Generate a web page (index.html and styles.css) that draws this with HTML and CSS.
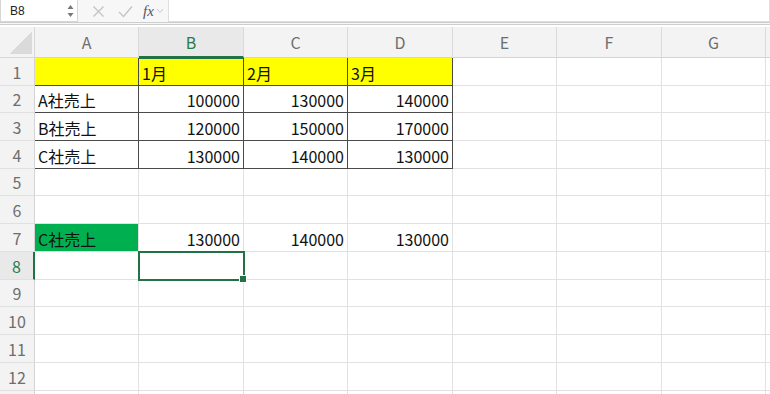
FILE: index.html
```html
<!DOCTYPE html>
<html>
  <head>
    <title>Book1</title>
    <link rel="stylesheet" href="styles.css">
  </head>

  <body>
    <div class="toolbar">
      <div class="namebox">
        <span>B8</span>
        <svg class="stepper" width="7" height="14" viewBox="0 0 7 14">
          <path d="M3.5 1 L6.5 5 L0.5 5 Z" fill="#777" />
          <path d="M3.5 13 L6.5 9 L0.5 9 Z" fill="#777" />
        </svg>
      </div>
      <div class="tools">
        <svg class="icon" width="13" height="13" viewBox="0 0 13 13">
          <path d="M1.5 1.5 L11.5 11.5 M11.5 1.5 L1.5 11.5" stroke="#c4c4c4" stroke-width="1.4" fill="none" />
        </svg>
        <svg class="icon" width="15" height="13" viewBox="0 0 15 13">
          <path d="M1 7 L5.5 11.5 L14 1.5" stroke="#c4c4c4" stroke-width="1.4" fill="none" />
        </svg>
        <span class="fx">fx</span>
        <svg class="chevron" width="8" height="6" viewBox="0 0 8 6">
          <path d="M1 1 L4 4.5 L7 1" stroke="#c8c8c8" stroke-width="1" fill="none" />
        </svg>
      </div>
      <div class="formula"></div>
    </div>

    <div class="sheet">
      <div class="corner"></div>
      <div class="colhead">A</div>
      <div class="colhead active">B</div>
      <div class="colhead">C</div>
      <div class="colhead">D</div>
      <div class="colhead">E</div>
      <div class="colhead">F</div>
      <div class="colhead">G</div>
      <div class="colhead"></div>

      <div class="rowhead">1</div>
      <div class="cell yellow bx"></div>
      <div class="cell yellow bx top-active">1月</div>
      <div class="cell yellow bx">2月</div>
      <div class="cell yellow bx">3月</div>
      <div class="cell"></div>
      <div class="cell"></div>
      <div class="cell"></div>
      <div class="cell"></div>

      <div class="rowhead">2</div>
      <div class="cell bx">A社売上</div>
      <div class="cell bx num">100000</div>
      <div class="cell bx num">130000</div>
      <div class="cell bx num">140000</div>
      <div class="cell"></div>
      <div class="cell"></div>
      <div class="cell"></div>
      <div class="cell"></div>

      <div class="rowhead">3</div>
      <div class="cell bx">B社売上</div>
      <div class="cell bx num">120000</div>
      <div class="cell bx num">150000</div>
      <div class="cell bx num">170000</div>
      <div class="cell"></div>
      <div class="cell"></div>
      <div class="cell"></div>
      <div class="cell"></div>

      <div class="rowhead">4</div>
      <div class="cell bx">C社売上</div>
      <div class="cell bx num">130000</div>
      <div class="cell bx num">140000</div>
      <div class="cell bx num">130000</div>
      <div class="cell"></div>
      <div class="cell"></div>
      <div class="cell"></div>
      <div class="cell"></div>

      <div class="rowhead">5</div>
      <div class="cell"></div>
      <div class="cell"></div>
      <div class="cell"></div>
      <div class="cell"></div>
      <div class="cell"></div>
      <div class="cell"></div>
      <div class="cell"></div>
      <div class="cell"></div>

      <div class="rowhead">6</div>
      <div class="cell"></div>
      <div class="cell"></div>
      <div class="cell"></div>
      <div class="cell"></div>
      <div class="cell"></div>
      <div class="cell"></div>
      <div class="cell"></div>
      <div class="cell"></div>

      <div class="rowhead">7</div>
      <div class="cell green">C社売上</div>
      <div class="cell num">130000</div>
      <div class="cell num">140000</div>
      <div class="cell num">130000</div>
      <div class="cell"></div>
      <div class="cell"></div>
      <div class="cell"></div>
      <div class="cell"></div>

      <div class="rowhead active">8</div>
      <div class="cell"></div>
      <div class="cell selected"></div>
      <div class="cell"></div>
      <div class="cell"></div>
      <div class="cell"></div>
      <div class="cell"></div>
      <div class="cell"></div>
      <div class="cell"></div>

      <div class="rowhead">9</div>
      <div class="cell"></div>
      <div class="cell"></div>
      <div class="cell"></div>
      <div class="cell"></div>
      <div class="cell"></div>
      <div class="cell"></div>
      <div class="cell"></div>
      <div class="cell"></div>

      <div class="rowhead">10</div>
      <div class="cell"></div>
      <div class="cell"></div>
      <div class="cell"></div>
      <div class="cell"></div>
      <div class="cell"></div>
      <div class="cell"></div>
      <div class="cell"></div>
      <div class="cell"></div>

      <div class="rowhead">11</div>
      <div class="cell"></div>
      <div class="cell"></div>
      <div class="cell"></div>
      <div class="cell"></div>
      <div class="cell"></div>
      <div class="cell"></div>
      <div class="cell"></div>
      <div class="cell"></div>

      <div class="rowhead">12</div>
      <div class="cell"></div>
      <div class="cell"></div>
      <div class="cell"></div>
      <div class="cell"></div>
      <div class="cell"></div>
      <div class="cell"></div>
      <div class="cell"></div>
      <div class="cell"></div>

      <!-- row 13 only peeks in at the bottom edge -->
      <div class="rowhead"></div>
      <div class="cell"></div>
      <div class="cell"></div>
      <div class="cell"></div>
      <div class="cell"></div>
      <div class="cell"></div>
      <div class="cell"></div>
      <div class="cell"></div>
      <div class="cell"></div>
    </div>
  </body>
</html>
```

FILE: styles.css
```css
* {
  box-sizing: border-box;
}

body {
  margin: 0;
  background: #ffffff;
  font-family: "Noto Sans CJK JP", "Noto Sans", sans-serif;
  overflow: hidden;
}

.toolbar {
  display: flex;
  align-items: stretch;
  height: 25px;
  background: #f7f7f7;
  border-bottom: 3px double #cdcdcd;
}

.namebox {
  display: flex;
  align-items: center;
  justify-content: space-between;
  width: 78px;
  height: 23px;
  margin-top: -1px;
  padding: 0 3px 0 9px;
  background: #ffffff;
  border: 1px solid #d6d6d6;
  font-family: "Liberation Sans", sans-serif;
  font-size: 12px;
  color: #222;
}

.tools {
  display: flex;
  align-items: center;
  gap: 13px;
  padding-left: 14px;
  width: 90px;
  height: 22px;
}

.fx {
  font-family: "Liberation Serif", serif;
  font-style: italic;
  font-size: 15px;
  color: #555;
  margin-left: -3px;
}

.chevron {
  margin-left: -11px;
}

.formula {
  flex: 1;
  height: 23px;
  margin-top: -1px;
  background: #ffffff;
  border: 1px solid #dedede;
}

.sheet {
  display: grid;
  grid-template-columns: 35px 104px 105px 104px 105px 104px 105px 104px 1fr;
  grid-template-rows: 31px 28px 27px 28px 28px 27px 28px 28px 28px 27px 28px 28px 28px 28px;
  margin-top: 2px;
  font-size: 16px;
}

.corner {
  background: linear-gradient(to bottom right, transparent 50%, #dadada 50%) no-repeat right 2px bottom 3px / 22px 22px, #f3f3f3;
  border-right: 1px solid #d8d8d8;
  border-bottom: 1px solid #d8d8d8;
}

.colhead {
  display: flex;
  align-items: center;
  justify-content: center;
  background: #f3f3f3;
  color: #6e6e6e;
  border-right: 1px solid #dadada;
  border-bottom: 1px solid #d4d4d4;
}

.colhead.active {
  background: #e9e9e9;
  color: #2c7a4b;
  border-bottom: 2px solid #217346;
}

.rowhead {
  display: flex;
  align-items: center;
  justify-content: center;
  background: #f3f3f3;
  color: #6e6e6e;
  border-right: 1px solid #d4d4d4;
  border-bottom: 1px solid #e0e0e0;
}

.rowhead.active {
  background: #e9e9e9;
  color: #2c7a4b;
  border-right: 2px solid #217346;
}

.cell {
  display: flex;
  align-items: center;
  padding: 2px 3px 0;
  color: #111;
  white-space: nowrap;
  border-right: 1px solid #e1e1e1;
  border-bottom: 1px solid #e1e1e1;
}

.num {
  justify-content: flex-end;
}

.yellow {
  background: #ffff00;
}

.green {
  background: #00b050;
}

/* the bordered block A1:D4 */
.bx {
  border-right-color: #4a4a4a;
  border-bottom-color: #4a4a4a;
}

.top-active {
  box-shadow: inset 0 1px 0 #217346;
}

.selected {
  position: relative;
  outline: 2px solid #217346;
  outline-offset: -1px;
  z-index: 1;
}

.selected::after {
  content: "";
  position: absolute;
  right: -4px;
  bottom: -4px;
  width: 6px;
  height: 6px;
  background: #217346;
  border: 1px solid #ffffff;
}
```
